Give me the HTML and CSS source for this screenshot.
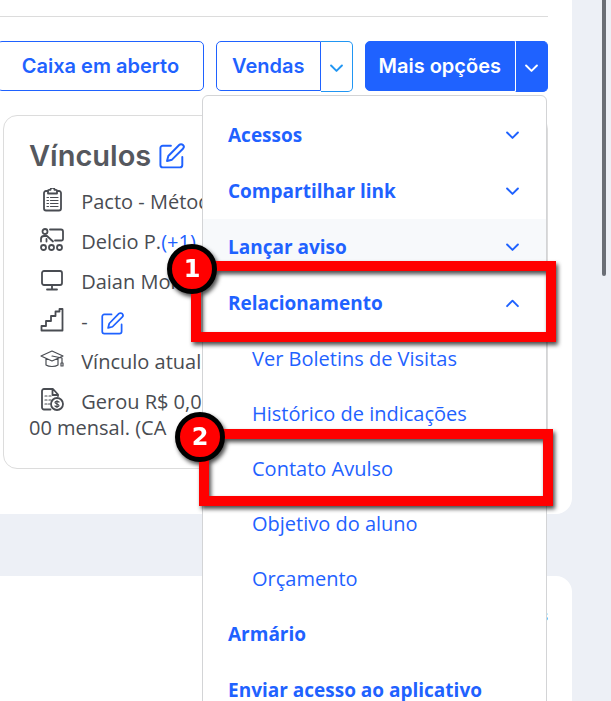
FILE: index.html
```html
<!DOCTYPE html>
<html lang="pt-BR">
  <head>
    <meta charset="UTF-8" />
    <meta name="viewport" content="width=device-width, initial-scale=1.0" />
    <title>Perfil do aluno</title>
    <link rel="stylesheet" href="styles.css">
  </head>
  <body>
    <!-- shared icons -->
    <svg class="sprite" aria-hidden="true">
      <symbol id="down" viewBox="0 0 12 8">
        <path d="M1 1.2 6 6.2 11 1.2" />
      </symbol>
      <symbol id="up" viewBox="0 0 12 8">
        <path d="M1 6.4 6 1.4 11 6.4" />
      </symbol>
      <symbol id="edit" viewBox="0 0 24 24">
        <path d="M11 2.5H3.5a2.2 2.2 0 0 0-2.2 2.2v15.6a2.2 2.2 0 0 0 2.2 2.2h15.8a2.2 2.2 0 0 0 2.2-2.2V13" />
        <path d="M18.6 1.8a2.4 2.4 0 0 1 3.5 3.5L12 15.4l-4.6 1.2 1.2-4.6z" />
      </symbol>
    </svg>

    <main>
      <section class="panel top">
        <hr />
        <div class="toolbar">
          <button class="btn">Caixa em aberto</button>
          <div class="split">
            <button class="btn">Vendas</button>
            <button class="caret light" aria-label="Abrir vendas"><svg class="arrow"><use href="#down" /></svg></button>
          </div>
          <div class="split">
            <button class="btn solid">Mais opções</button>
            <button class="caret solid" aria-label="Abrir opções"><svg class="arrow"><use href="#down" /></svg></button>

            <ul class="menu">
              <li><button class="item">Acessos <svg class="arrow"><use href="#down" /></svg></button></li>
              <li><button class="item">Compartilhar link <svg class="arrow"><use href="#down" /></svg></button></li>
              <li><button class="item hover">Lançar aviso <svg class="arrow"><use href="#down" /></svg></button></li>
              <li>
                <button class="item">Relacionamento <svg class="arrow"><use href="#up" /></svg>
                  <span class="step step-1"><b>1</b></span>
                </button>
                <ul class="submenu">
                  <li><a href="#">Ver Boletins de Visitas</a></li>
                  <li><a href="#">Histórico de indicações</a></li>
                  <li><a href="#">Contato Avulso<span class="step step-2"><b>2</b></span></a></li>
                  <li><a href="#">Objetivo do aluno</a></li>
                  <li><a href="#">Orçamento</a></li>
                </ul>
              </li>
              <li><button class="item">Armário</button></li>
              <li><button class="item">Enviar acesso ao aplicativo</button></li>
            </ul>
          </div>
        </div>

        <div class="card">
          <h2>Vínculos <a href="#" aria-label="Editar vínculos"><svg class="edit"><use href="#edit" /></svg></a></h2>
          <ul class="links">
            <li>
              <svg class="ico" viewBox="0 0 24 24">
                <path d="M7.5 3H6a2 2 0 0 0-2 2v15.500a2 2 0 0 0 2 2h13a2 2 0 0 0 2-2V5a2 2 0 0 0-2-2h-1.500" />
                <path d="M8 5.500V2.800a1 1 0 0 1 1-1h1.500a2 2 0 0 1 4 0H16a1 1 0 0 1 1 1v2.700z" />
                <path class="thin" d="M7 9.500h1.500M10.500 9.500H18M7 12.500h1.500M10.500 12.500H18M7 15.500h1.500M10.500 15.500H18M7 18.500h1.500M10.500 18.500H18" />
              </svg>
              Pacto - Método
            </li>
            <li>
              <svg class="ico" viewBox="0 0 24 24">
                <path d="M10 1.500h11a2 2 0 0 1 2 2v7.500a1.500 1.500 0 0 1-1.500 1.500H15M1 13.500v-2.500a3 3 0 0 1 3-3h3l6 5.500M6.500 11v2.500" />
                <circle cx="5" cy="3.500" r="2.500" />
                <circle cx="3.500" cy="19.500" r="2.500" /><circle cx="11.500" cy="19.500" r="2.500" /><circle cx="19.500" cy="19.500" r="2.500" />
              </svg>
              Delcio P.<a href="#">(+1)</a>
            </li>
            <li>
              <svg class="ico" viewBox="0 0 24 24">
                <rect x="2" y="3" width="20" height="14" rx="2" />
                <path d="M12 17v4.500M7 21.500h10" />
              </svg>
              Daian Mor
            </li>
            <li>
              <svg class="ico" viewBox="0 0 24 24">
                <path d="M1.500 22.500v-4.500h4.500v-5h5v-5h4.500V3.500h4V1h3v21.500z" />
              </svg>
              - <a href="#" aria-label="Editar nível"><svg class="edit small"><use href="#edit" /></svg></a>
            </li>
            <li>
              <svg class="ico" viewBox="0 0 24 24">
                <path class="thin" d="M1 8 12 3l11 5-11 5zM6 10.500V17c3 2 9 2 12 0v-6.500M12 8l10 2v5M21 15h2v3h-2z" />
              </svg>
              Vínculo atual
            </li>
            <li>
              <svg class="ico" viewBox="0 0 24 24">
                <path d="M10.500 21.500H4a2 2 0 0 1-2-2V3a2 2 0 0 1 2-2h9l5 5.500v1.500M12.500 1.500V7H18" />
                <circle cx="17" cy="16" r="6" />
                <path class="thin" d="M5 8h2M9 8h2M5 12h2M9 12h2M5 16h2M8.500 16h1.500M19 14c-1-1-4-1-4 .5s4 1.500 4 3-3 1.500-4 .5M17 12.500v7" />
              </svg>
              Gerou R$ 0,00<br />00 mensal. (CA
            </li>
          </ul>
        </div>
      </section>

      <section class="panel bottom">
        <a href="#">Ver todos</a>
      </section>
    </main>
    <div class="scroll"></div>
  </body>
</html>
```
FILE: styles.css
```css
* {
  box-sizing: border-box;
}

body {
  margin: 0px;
  height: 100vh;
  display: flex;
  overflow: hidden;
  background-color: #edf0f6;
  color: #494c52;
  font-family: "Open Sans", sans-serif;
  font-size: 20px;
  line-height: 26px;
}

main {
  flex: 1;
  min-width: 0;
  display: flex;
  flex-direction: column;
  gap: 62px;
}

ul {
  list-style: none;
  margin: 0px;
  padding: 0px;
}

a {
  color: #1f62ff;
  text-decoration: none;
}

button {
  font: inherit;
  color: #1f62ff;
  background: none;
  border: 0;
  padding: 0;
  cursor: pointer;
}

svg {
  fill: none;
  stroke: currentColor;
  stroke-width: 1.8;
  stroke-linecap: round;
  stroke-linejoin: round;
}

.sprite {
  position: absolute;
  width: 0;
  height: 0;
}

.arrow {
  width: 13px;
  height: 9px;
}

.panel {
  background-color: #fff;
  padding-right: 24px;
}

.top {
  padding-top: 16px;
  padding-bottom: 45px;
  border-radius: 0px 0px 16px 0px;
}

.bottom {
  flex: 1;
  padding-top: 26px;
  border-radius: 0px 16px 0px 0px;
  text-align: right;
  font-size: 15px;
  font-weight: bold;
}

hr {
  margin: 0px;
  border: 0;
  border-top: 1px solid #dcdcdc;
}

/* buttons */
.toolbar {
  display: flex;
  justify-content: flex-end;
  gap: 12px;
  margin-top: 24px;
  margin-bottom: 23px;
}

.split {
  position: relative;
  display: flex;
}

.btn {
  height: 50px;
  padding: 0px 24px;
  border: 1px solid #1f62ff;
  border-radius: 5px;
  font-family: Inter, sans-serif;
  font-weight: 600;
  white-space: nowrap;
}

.split .btn {
  padding: 0px 15px;
  border-radius: 5px 0px 0px 5px;
}

.split .btn.solid {
  padding: 0px 13px;
}

.caret {
  display: flex;
  align-items: center;
  justify-content: center;
  width: 32px;
  height: 51px;
  padding-top: 4px;
  border: 1px solid #1f62ff;
  border-left: 0;
  border-radius: 0px 5px 5px 0px;
}

.caret.light {
  border-color: #2196f3;
  color: #2196f3;
}

.btn.solid,
.caret.solid {
  background-color: #1f62ff;
  color: #fff;
}

.caret.solid {
  width: 33px;
  border-left: 1px solid #fff;
}

/* dropdown */
.menu {
  position: absolute;
  z-index: 5;
  top: 54px;
  right: 1px;
  width: 345px;
  padding: 11px 0px;
  background-color: #fff;
  border: 1px solid #d3d4d6;
  border-radius: 6px;
}

.item {
  position: relative;
  display: flex;
  align-items: center;
  justify-content: space-between;
  width: 100%;
  height: 56px;
  padding: 0px 27px 0px 25px;
  font-size: 19px;
  line-height: 20px;
  font-weight: bold;
  white-space: nowrap;
}

.item.hover {
  background-color: #f7f9fb;
}

.submenu a {
  position: relative;
  display: flex;
  align-items: center;
  height: 55px;
  padding-left: 49px;
  line-height: 20px;
}

/* numbered step marks */
.step {
  position: absolute;
  border: 10px solid #f00;
  filter: drop-shadow(2px 3px 2px rgba(0, 0, 0, 0.7));
  pointer-events: none;
}

.step-1 {
  inset: -14px -10px -11px -12px;
}

.step-2 {
  inset: -12px -7px -10px -4px;
}

.step b {
  position: absolute;
  left: -34px;
  top: -27px;
  width: 50px;
  height: 50px;
  border: 5px solid #000;
  border-radius: 50%;
  background-color: #f00;
  color: #fff;
  font: bold 24px/40px "DejaVu Sans", sans-serif;
  text-align: center;
}

/* card */
.card {
  margin-left: 3px;
  padding: 22px 25px 27px;
  border: 1px solid #dcdcdc;
  border-radius: 14px;
}

h2 {
  display: flex;
  align-items: center;
  gap: 8px;
  margin: 0px 0px 15px;
  font-family: Inter, sans-serif;
  font-size: 29px;
  line-height: 36px;
  font-weight: 600;
  color: #55585e;
}

.edit {
  display: block;
  width: 26px;
  height: 26px;
}

.edit.small {
  display: inline-block;
  width: 23px;
  height: 23px;
  margin: -4px 0px -4px 8px;
  vertical-align: -2px;
}

.links {
  display: flex;
  flex-direction: column;
  gap: 14px;
}

.ico {
  width: 24px;
  height: 24px;
  margin: -4px 12px -4px 11px;
  vertical-align: 1px;
}

.thin {
  stroke-width: 1.2;
}

/* page scrollbar */
.scroll {
  width: 39px;
  height: 276px;
  padding-left: 30px;
}

.scroll::before {
  content: "";
  display: block;
  width: 4px;
  height: 100%;
  background-color: #6b6f76;
  border-radius: 0px 0px 2px 2px;
}
```
